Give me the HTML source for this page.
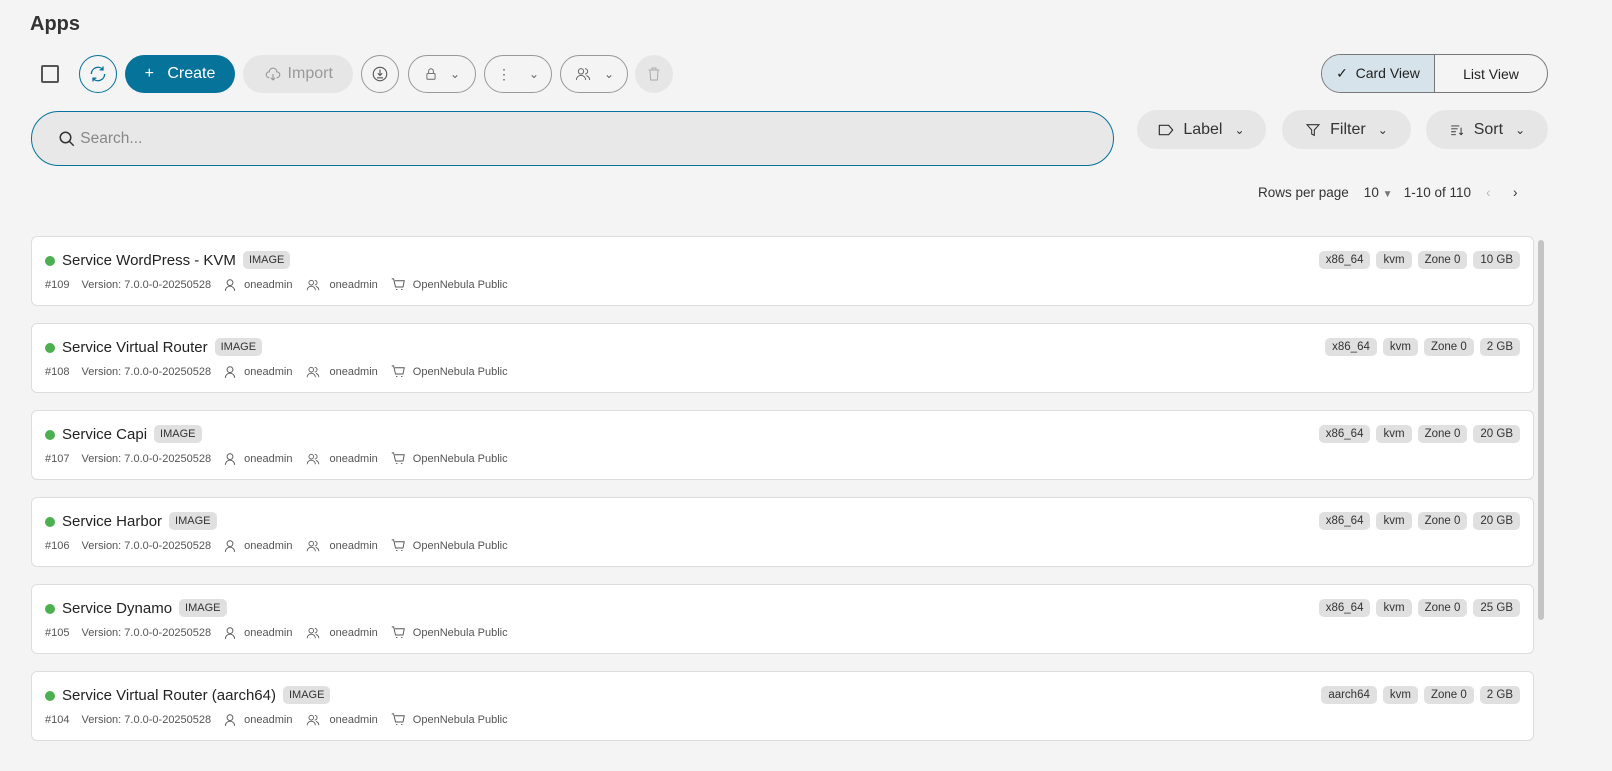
<!DOCTYPE html><html><head><style>
*{box-sizing:border-box;margin:0;padding:0}
body{width:1612px;height:771px;overflow:hidden;background:#f4f4f4;font-family:"Liberation Sans",sans-serif;color:#222;position:relative}
.a{position:absolute}
.pill{position:absolute;border-radius:20px;display:flex;align-items:center;justify-content:center;font-size:15px}
.ob{border:1px solid #999;background:transparent}
.card{position:absolute;left:31px;width:1503px;height:70px;background:#fff;border:1px solid #ddd;border-radius:6px}
.dot{position:absolute;left:13px;top:19px;width:10px;height:10px;border-radius:50%;background:#4caf50}
.nm{position:absolute;left:30px;top:14px;font-size:15px;color:#222;display:flex;align-items:center;white-space:nowrap}
.tg{background:#e0e0e0;border-radius:5px;font-size:11px;padding:3px 6px;margin-left:7px;color:#333}
.meta{position:absolute;left:13px;top:40px;font-size:11px;color:#555;display:flex;align-items:center;white-space:nowrap}
.meta span{margin-right:12px;display:flex;align-items:center}
.meta svg{margin-right:7px}
.tags{position:absolute;right:13px;top:14px;display:flex}
.tags div{background:#e0e0e0;border-radius:5px;font-size:11.5px;padding:3px 7px;margin-left:6px;color:#333}
.ch{font-size:12px;color:#666;margin-left:12px}
</style></head><body>
<div class="a" style="left:30px;top:13px;font-size:20px;font-weight:bold;color:#333">Apps</div>
<div class="a" style="left:41px;top:65px;width:18px;height:18px;border:2px solid #555;border-radius:2px"></div>
<div class="pill" style="left:79px;top:55px;width:38px;height:38px;border:1px solid #06739a">
<svg width="20" height="20" viewBox="0 0 24 24" fill="none" stroke="#06739a" stroke-width="1.6"><path d="M4 12a8 8 0 0 1 14-5.3M20 12a8 8 0 0 1-14 5.3M18 3v4h-4M6 21v-4h4"/></svg></div>
<div class="pill" style="left:125px;top:55px;width:110px;height:38px;background:#06739a;color:#fff;font-size:16px">+&nbsp;&nbsp; Create</div>
<div class="pill" style="left:243px;top:55px;width:110px;height:38px;background:#e6e6e6;color:#999;font-size:16px">
<svg width="20" height="18" viewBox="0 0 24 24" fill="none" stroke="#999" stroke-width="1.5"><path d="M7 17a4 4 0 0 1 0-8 5 5 0 0 1 10 0 4 4 0 0 1 0 8M12 12v8M9 17l3 3 3-3"/></svg>&nbsp;Import</div>
<div class="pill ob" style="left:361px;top:55px;width:38px;height:38px"><svg width="18" height="18" viewBox="0 0 24 24" fill="none" stroke="#555" stroke-width="1.5"><circle cx="12" cy="12" r="9"/><path d="M12 6v8M9 11l3 3 3-3M8 17h8"/></svg></div>
<div class="pill ob" style="left:408px;top:55px;width:68px;height:38px"><svg width="14" height="16" viewBox="0 0 24 24" fill="none" stroke="#666" stroke-width="1.6"><rect x="5" y="11" width="14" height="10" rx="1"/><path d="M8 11V7a4 4 0 0 1 8 0v4"/></svg><span class="ch">⌄</span></div>
<div class="pill ob" style="left:484px;top:55px;width:68px;height:38px;color:#666;font-size:14px">⋮<span class="ch" style="margin-left:18px">⌄</span></div>
<div class="pill ob" style="left:560px;top:55px;width:68px;height:38px"><svg width="18" height="16" viewBox="0 0 24 24" fill="none" stroke="#666" stroke-width="1.5"><circle cx="9" cy="8" r="4"/><path d="M2 21a7 7 0 0 1 14 0M15 4a4 4 0 0 1 0 8M22 21a7 7 0 0 0-5-6.5"/></svg><span class="ch">⌄</span></div>
<div class="pill" style="left:635px;top:55px;width:38px;height:38px;background:#e6e6e6"><svg width="16" height="18" viewBox="0 0 24 24" fill="none" stroke="#aaa" stroke-width="1.5"><path d="M4 6h16M9 6V3h6v3M6 6l1 15h10l1-15"/></svg></div>
<div class="a" style="left:1321px;top:54px;width:227px;height:39px;border:1px solid #777;border-radius:20px;overflow:hidden;display:flex;font-size:14px">
<div style="width:113px;background:#d6e3ea;border-right:1px solid #777;display:flex;align-items:center;justify-content:center">✓&nbsp; Card View</div>
<div style="flex:1;display:flex;align-items:center;justify-content:center">List View</div></div>
<div class="a" style="left:31px;top:111px;width:1083px;height:55px;border:1px solid #06739a;border-radius:28px;background:#e8e8e8;display:flex;align-items:center;padding-left:26px;color:#888;font-size:15.5px">
<svg width="18" height="18" viewBox="0 0 24 24" fill="none" stroke="#333" stroke-width="2"><circle cx="10" cy="10" r="7"/><path d="M15 15l6 6"/></svg>&nbsp;Search...</div>
<div class="pill" style="left:1137px;top:110px;width:129px;height:39px;background:#e6e6e6;font-size:16px;color:#333"><svg width="16" height="12" viewBox="0 0 24 18" fill="none" stroke="#333" stroke-width="1.8"><path d="M2 2h14l6 7-6 7H2z"/></svg>&nbsp; Label<span class="ch" style="color:#333">⌄</span></div>
<div class="pill" style="left:1282px;top:110px;width:129px;height:39px;background:#e6e6e6;font-size:16px;color:#333"><svg width="16" height="16" viewBox="0 0 24 24" fill="none" stroke="#333" stroke-width="1.6"><path d="M3 4h18l-7 8v8l-4-2v-6z"/></svg>&nbsp; Filter<span class="ch" style="color:#333">⌄</span></div>
<div class="pill" style="left:1426px;top:110px;width:122px;height:39px;background:#e6e6e6;font-size:16px;color:#333"><svg width="16" height="14" viewBox="0 0 24 24" fill="none" stroke="#333" stroke-width="1.6"><path d="M2 5h14M2 10h11M2 15h8M2 20h8M19 8v12M16 17l3 3 3-3"/></svg>&nbsp; Sort<span class="ch" style="color:#333">⌄</span></div>
<div class="a" style="left:1258px;top:185px;font-size:13.5px;color:#333;white-space:nowrap">Rows per page &nbsp;&nbsp; 10 <span style="color:#777;font-size:10px">▼</span> &nbsp; 1-10 of 110 &nbsp;&nbsp; <span style="color:#bbb">‹</span> &nbsp;&nbsp;&nbsp;&nbsp; ›</div>
<div class="a" style="left:1538px;top:240px;width:6px;height:380px;background:#c4c4c4;border-radius:3px"></div>
<div id="c"></div>
<script>
var d=[["Service WordPress - KVM",109,"x86_64","10 GB"],["Service Virtual Router",108,"x86_64","2 GB"],["Service Capi",107,"x86_64","20 GB"],["Service Harbor",106,"x86_64","20 GB"],["Service Dynamo",105,"x86_64","25 GB"],["Service Virtual Router (aarch64)",104,"aarch64","2 GB"]];
var u='<svg width="14" height="14" viewBox="0 0 24 24" fill="none" stroke="#555" stroke-width="1.6"><circle cx="12" cy="8" r="5"/><path d="M4 22a8 8 0 0 1 16 0"/></svg>';
var g='<svg width="18" height="14" viewBox="0 0 24 24" fill="none" stroke="#555" stroke-width="1.5"><circle cx="9" cy="8" r="4"/><path d="M2 21a7 7 0 0 1 14 0M15 4a4 4 0 0 1 0 8M22 21a7 7 0 0 0-5-6.5"/></svg>';
var m='<svg width="16" height="15" viewBox="0 0 24 24" fill="none" stroke="#555" stroke-width="1.5"><path d="M2 3h3l3 13h12l2-10H7M9 20h2M17 20h2"/></svg>';
var h='';d.forEach(function(x,i){h+='<div class="card" style="top:'+(236+i*87)+'px"><div class="dot"></div><div class="nm">'+x[0]+'<span class="tg">IMAGE</span></div><div class="meta"><span>#'+x[1]+'</span><span>Version: 7.0.0-0-20250528</span><span>'+u+'oneadmin</span><span>'+g+'oneadmin</span><span>'+m+'OpenNebula Public</span></div><div class="tags"><div>'+x[2]+'</div><div>kvm</div><div>Zone 0</div><div>'+x[3]+'</div></div></div>'});
document.getElementById('c').innerHTML=h;
</script>
</body></html>
